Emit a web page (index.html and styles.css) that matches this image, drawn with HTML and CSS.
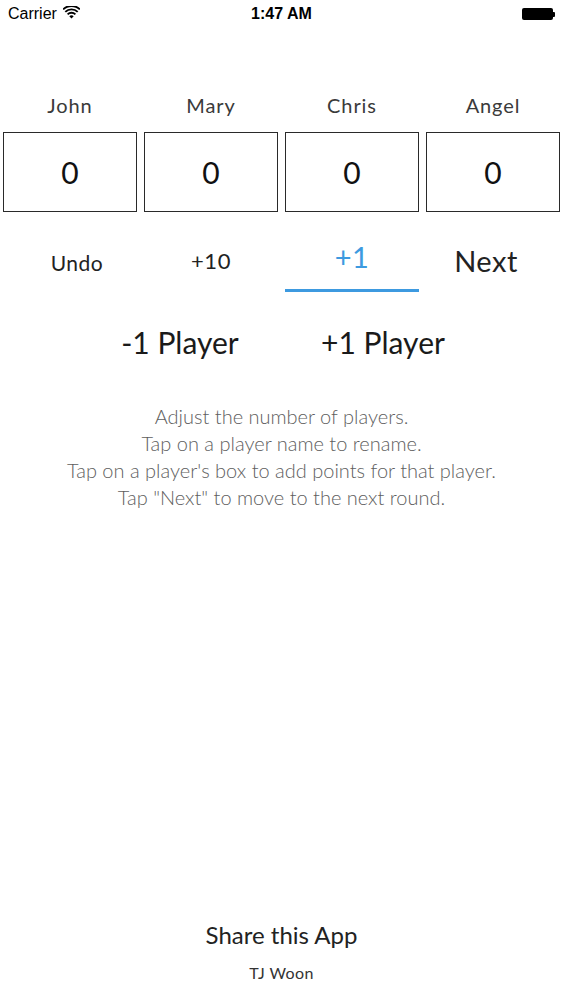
FILE: index.html
```html
<!DOCTYPE html>
<html>
<head>
<meta charset="utf-8">
<link rel="stylesheet" href="styles.css">
</head>
<body>
<div class="page">
  <div class="status">
    <div class="status-left">
      <span class="carrier">Carrier</span>
      <svg class="wifi" width="17" height="13" viewBox="0 0 17 13">
        <path d="M8.5 12.5 L6.3 10.2 A3.2 3.2 0 0 1 10.7 10.2 Z" fill="#000"/>
        <path d="M4.6 8.4 A5.6 5.6 0 0 1 12.4 8.4" fill="none" stroke="#000" stroke-width="1.9"/>
        <path d="M2.3 5.9 A8.9 8.9 0 0 1 14.7 5.9" fill="none" stroke="#000" stroke-width="1.9"/>
        <path d="M0.1 3.4 A12 12 0 0 1 16.9 3.4" fill="none" stroke="#000" stroke-width="1.9"/>
      </svg>
    </div>
    <div class="time">1:47 AM</div>
    <div class="status-right">
      <div class="battery"><div class="battery-body"></div><div class="battery-nub"></div></div>
    </div>
  </div>

  <div class="names">
    <div class="name">John</div>
    <div class="name">Mary</div>
    <div class="name">Chris</div>
    <div class="name">Angel</div>
  </div>
  <div class="boxes">
    <div class="box">0</div>
    <div class="box">0</div>
    <div class="box">0</div>
    <div class="box">0</div>
  </div>
  <div class="controls">
    <div class="ctrl small undo">Undo</div>
    <div class="ctrl mid">+10</div>
    <div class="ctrl big active">+1</div>
    <div class="ctrl big next">Next</div>
  </div>
  <div class="players">
    <div class="player">-1 Player</div>
    <div class="player">+1 Player</div>
  </div>
  <div class="help">
    <p>Adjust the number of players.</p>
    <p>Tap on a player name to rename.</p>
    <p>Tap on a player's box to add points for that player.</p>
    <p>Tap "Next" to move to the next round.</p>
  </div>
  <div class="footer">
    <div class="share">Share this App</div>
    <div class="author">TJ Woon</div>
  </div>
</div>
</body>
</html>
```
FILE: styles.css
```css
html, body {
  margin: 0;
  padding: 0;
  background: #fff;
}
.page {
  width: 563px;
  height: 1000px;
  display: flex;
  flex-direction: column;
  font-family: "Lato", "Liberation Sans", sans-serif;
  color: #222;
}
.status {
  height: 28px;
  display: grid;
  grid-template-columns: 1fr auto 1fr;
  align-items: center;
  padding: 0 8px;
  font-family: "Liberation Sans", Arial, sans-serif;
  font-size: 16px;
  color: #000;
}
.status-left {
  display: flex;
  align-items: center;
  gap: 6px;
}
.wifi { margin-top: -3px; }
.time {
  font-weight: bold;
}
.status-right {
  display: flex;
  justify-content: flex-end;
}
.battery {
  display: flex;
  align-items: center;
}
.battery-body {
  width: 31px;
  height: 12px;
  background: #000;
  border-radius: 2px;
}
.battery-nub {
  width: 2px;
  height: 5px;
  background: #000;
  border-radius: 0 1px 1px 0;
}
.names, .boxes, .controls {
  display: grid;
  grid-template-columns: repeat(4, 134px);
  column-gap: 7px;
  padding: 0 4px 0 3px;
}
.names {
  margin-top: 65px;
}
.name {
  text-align: center;
  font-size: 20px;
  line-height: 24px;
  color: #3a3a3a;
  letter-spacing: 0.9px;
}
.boxes {
  margin-top: 15px;
}
.box {
  height: 78px;
  border: 1.5px solid #2a2a2a;
  display: flex;
  align-items: center;
  justify-content: center;
  font-size: 30px;
  color: #111;
}
.controls {
  margin-top: 23px;
}
.ctrl {
  height: 54px;
  display: flex;
  align-items: center;
  justify-content: center;
  border-bottom: 3px solid transparent;
  color: #222;
  letter-spacing: 0.5px;
}
.ctrl.small { font-size: 21px; }
.ctrl.undo { padding-left: 14px; }
.ctrl.mid { font-size: 22px; padding-bottom: 4px; height: 50px; }
.ctrl.big { font-size: 29px; padding-bottom: 4px; height: 50px; }
.ctrl.next { padding-right: 14px; }
.ctrl.active {
  color: #3d9ae0;
  border-bottom-color: #3d9ae0;
  padding-bottom: 12px;
  height: 42px;
}
.players {
  width: 406px;
  margin: 32px auto 0;
  display: grid;
  grid-template-columns: 1fr 1fr;
}
.player {
  text-align: center;
  font-size: 30px;
  line-height: 36px;
  color: #1a1a1a;
}
.help {
  margin-top: 43px;
  text-align: center;
  font-weight: 300;
  font-size: 20px;
  line-height: 27px;
  color: #5e5e5e;
}
.help p {
  margin: 0;
}
.footer {
  margin-top: auto;
  padding-bottom: 17px;
  display: flex;
  flex-direction: column;
  align-items: center;
}
.share {
  font-size: 24px;
  line-height: 30px;
  color: #222;
}
.author {
  margin-top: 13px;
  font-size: 16px;
  line-height: 20px;
  color: #333;
  letter-spacing: 0.4px;
}
```
